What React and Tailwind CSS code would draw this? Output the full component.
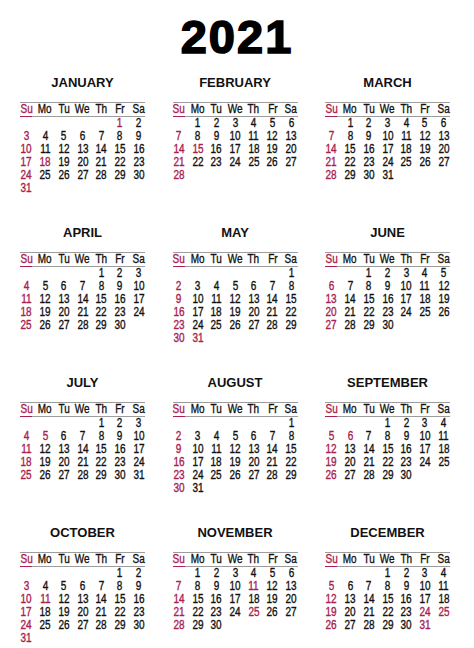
const MONTHS = [
  'JANUARY', 'FEBRUARY', 'MARCH', 'APRIL', 'MAY', 'JUNE',
  'JULY', 'AUGUST', 'SEPTEMBER', 'OCTOBER', 'NOVEMBER', 'DECEMBER',
];

const DAYS = ['Su', 'Mo', 'Tu', 'We', 'Th', 'Fr', 'Sa'];

// first weekday of each month as printed (August is printed like May)
const FIRST = [5, 1, 1, 4, 6, 2, 4, 6, 3, 5, 1, 3];
const LENGTH = [31, 28, 31, 30, 31, 30, 31, 31, 30, 31, 30, 31];

// holidays shown in red, by month index
const HOLIDAYS = {
  0: [1, 18],
  1: [15],
  4: [31],
  6: [4, 5],
  8: [6],
  9: [11],
  10: [11, 25],
  11: [24, 25, 31],
};

function Month({ index, name }) {
  const cells = [];
  for (let i = 0; i < FIRST[index]; i++) cells.push(null);
  for (let d = 1; d <= LENGTH[index]; d++) cells.push(d);
  const red = HOLIDAYS[index] || [];

  return (
    <div className="h-[150px]">
      <div className="text-center text-[13px] leading-[26px] font-bold text-[#111]">{name}</div>
      <div className="mt-[6px] mx-[3px] h-px bg-[#9c9c9c]" />
      <div className="grid grid-cols-7 day-font">
        {DAYS.map((d, i) => (
          <div
            key={d}
            className={`h-[13px] leading-[13px] text-center ${i === 0 ? 'text-[#a8204f]' : 'text-[#111]'}`}
          >
            <span className="inline-block scale-x-[0.8]">{d}</span>
          </div>
        ))}
      </div>
      <div className="mx-[3px] h-px bg-[#9c9c9c] flex">
        <div className="w-[12px] h-px bg-[#a8204f]" />
      </div>
      <div className="grid grid-cols-7 day-font">
        {cells.map((d, i) => (
          <div
            key={i}
            className={`h-[13px] leading-[13px] text-center ${
              d && (i % 7 === 0 || red.includes(d)) ? 'text-[#a8204f]' : 'text-[#111]'
            }`}
          >
            <span className="inline-block scale-x-[0.8]">{d || ''}</span>
          </div>
        ))}
      </div>
    </div>
  );
}

export default function App() {
  return (
    <div
      className="w-[474px] h-[648px] bg-white overflow-hidden"
      style={{ fontFamily: '"Liberation Sans", Arial, sans-serif' }}
    >
      <style>{`.day-font{font-family:"Liberation Sans",Arial,sans-serif;font-size:12.5px;-webkit-text-stroke:0.35px currentColor;}`}</style>
      <div className="h-[70px] pt-[13px] text-center text-[47px] leading-[47px] font-bold tracking-[2px] text-black [-webkit-text-stroke:1.6px_black]">
        2021
      </div>
      <div className="grid grid-cols-[131px_131px_131px] gap-x-[21.5px] pl-[17px]">
        {MONTHS.map((m, i) => (
          <Month key={m} index={i} name={m} />
        ))}
      </div>
    </div>
  );
}
